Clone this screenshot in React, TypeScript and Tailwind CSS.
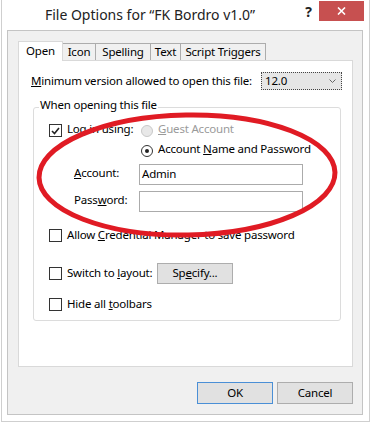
import React from "react";

const font = { fontFamily: '"Noto Sans", "Segoe UI", sans-serif' };

function Checkbox({ checked = false }: { checked?: boolean }) {
  return (
    <span className="flex h-[13px] w-[13px] shrink-0 items-center justify-center border border-[#333333] bg-white">
      {checked && (
        <svg width="9" height="8" viewBox="0 0 9 8">
          <path d="M1 4 L3.5 6.5 L8 1" fill="none" stroke="#222" strokeWidth="1.6" />
        </svg>
      )}
    </span>
  );
}

function Radio({ checked = false, disabled = false }: { checked?: boolean; disabled?: boolean }) {
  return (
    <span
      className={
        disabled
          ? "flex h-[12px] w-[12px] shrink-0 items-center justify-center rounded-full border border-[#c8c8c8] bg-[#e8e8e8]"
          : "flex h-[12px] w-[12px] shrink-0 items-center justify-center rounded-full border border-[#333333] bg-white"
      }
    >
      {checked && <span className="h-[4px] w-[4px] rounded-full bg-[#222]" />}
    </span>
  );
}

export default function App() {
  return (
    <div
      className="relative h-[429px] w-[373px] overflow-hidden whitespace-nowrap bg-white text-[11.5px] leading-[16px] tracking-[-0.2px] text-black"
      style={font}
    >
      <div className="ml-[1px] flex h-[422px] w-[369px] flex-col border-x border-b border-[#cfcfcf] bg-white">
        {/* title bar */}
        <div className="flex h-[30px] shrink-0 items-start">
          <div className="flex h-[30px] flex-1 items-center justify-center pb-[1px] text-[14px] tracking-normal text-[#222]">
            File Options for “FK Bordro v1.0”
          </div>
          <div className="flex h-[22px] w-[21px] items-center justify-center pt-[2px] text-[14px] font-bold text-[#222]">?</div>
          <div className="mt-[1px] flex h-[20px] w-[45px] items-center justify-center bg-[#c75050]">
            <svg width="9" height="8" viewBox="0 0 9 8">
              <path d="M1 0.5 L8 7.5 M8 0.5 L1 7.5" stroke="#fff" strokeWidth="1.6" />
            </svg>
          </div>
          <div className="w-[5px]" />
        </div>

        {/* client */}
        <div className="ml-[5px] flex h-[385px] w-[356px] flex-col border border-[#c4c4c4] bg-[#f0f0f0] pl-[10px] pt-[10px]">
          {/* tabs */}
          <div className="flex h-[19px] items-end">
            <div className="relative z-10 -mb-px flex h-[20px] w-[45px] items-center justify-center border border-b-0 border-[#d9d9d9] bg-white pb-[2px]">
              Open
            </div>
            <div className="-ml-px flex h-[17px] w-[34px] items-center justify-center border border-b-0 border-[#acacac] bg-[#f0f0f0] pb-[1px]">
              Icon
            </div>
            <div className="-ml-px flex h-[17px] w-[56px] items-center justify-center border border-b-0 border-[#acacac] bg-[#f0f0f0] pb-[1px]">
              Spelling
            </div>
            <div className="-ml-px flex h-[17px] w-[31px] items-center justify-center border border-b-0 border-[#acacac] bg-[#f0f0f0] pb-[1px]">
              Text
            </div>
            <div className="-ml-px flex h-[17px] w-[86px] items-center justify-center border border-b-0 border-[#acacac] bg-[#f0f0f0] pb-[1px]">
              Script Triggers
            </div>
          </div>

          {/* panel */}
          <div className="flex h-[307px] w-[335px] flex-col border border-[#d9d9d9] bg-white">
            <div className="ml-[12px] mt-[11px] flex h-[18px] items-center">
              <div className="w-[230px]">
                <span className="underline">M</span>inimum version allowed to open this file:
              </div>
              <div className="flex h-[18px] w-[81px] items-center justify-between border border-dotted border-[#444] bg-[#e6e6e6] pl-[3px] pr-[5px]">
                <span>12.0</span>
                <svg width="7" height="4" viewBox="0 0 7 4">
                  <path d="M0.5 0.5 L3.5 3.5 L6.5 0.5" fill="none" stroke="#666" strokeWidth="1" />
                </svg>
              </div>
            </div>

            {/* group */}
            <div className="relative ml-[14px] mt-[17px] flex h-[214px] w-[308px] flex-col rounded-[3px] border border-[#dcdcdc]">
              <span className="absolute left-[5px] top-[-11px] bg-white px-[1px]">When opening this file</span>

              <div className="ml-[15px] mt-[13px] flex h-[19px] items-center">
                <Checkbox checked />
                <span className="ml-[5px] w-[74px] pb-[3px]">Log in using:</span>
                <Radio disabled />
                <span className="ml-[5px] pb-[3px] text-[#9a9a9a]">
                  <span className="underline">G</span>uest Account
                </span>
              </div>

              <div className="ml-[107px] mt-[1px] flex h-[19px] items-center">
                <Radio checked />
                <span className="ml-[5px] pb-[3px]">
                  Account <span className="underline">N</span>ame and Password
                </span>
              </div>

              <div className="ml-[40px] mt-[4px] flex h-[21px] items-center">
                <span className="w-[65px] pb-[3px]">
                  <span className="underline">A</span>ccount:
                </span>
                <div className="flex h-[21px] w-[164px] items-center border border-[#ababab] bg-white pb-[2px] pl-[2px]">Admin</div>
              </div>

              <div className="ml-[40px] mt-[6px] flex h-[21px] items-center">
                <span className="w-[65px] pb-[3px]">
                  Pass<span className="underline">w</span>ord:
                </span>
                <div className="h-[21px] w-[164px] border border-[#ababab] bg-white" />
              </div>

              <div className="ml-[15px] mt-[14px] flex h-[19px] items-center">
                <Checkbox />
                <span className="ml-[5px] pb-[2px]">
                  Allow <span className="underline">C</span>redential Manager to save password
                </span>
              </div>

              <div className="ml-[15px] mt-[18px] flex h-[21px] items-center">
                <Checkbox />
                <span className="ml-[5px] w-[90px] pb-[2px]">
                  Switch to <span className="underline">l</span>ayout:
                </span>
                <div className="flex h-[21px] w-[76px] items-center justify-center border border-[#adadad] bg-[#e1e1e1] pb-[1px]">
                  <span>
                    Sp<span className="underline">e</span>cify...
                  </span>
                </div>
              </div>

              <div className="ml-[15px] mt-[11px] flex h-[19px] items-center">
                <Checkbox />
                <span className="ml-[5px] pb-[2px]">
                  Hide all <span className="underline">t</span>oolbars
                </span>
              </div>
            </div>
          </div>

          {/* buttons */}
          <div className="mt-[15px] flex w-[335px] justify-end gap-[4px]">
            <div className="flex h-[22px] w-[76px] items-center justify-center border border-[#4a8fd6] bg-[#e1e1e1]">OK</div>
            <div className="flex h-[22px] w-[76px] items-center justify-center border border-[#adadad] bg-[#e1e1e1]">Cancel</div>
          </div>
        </div>
      </div>

      {/* red hand-drawn ellipse overlay */}
      <svg className="pointer-events-none absolute left-0 top-0" width="373" height="429" viewBox="0 0 373 429">
        <ellipse cx="187" cy="175" rx="148" ry="60" fill="none" stroke="#e01b24" strokeWidth="5" transform="rotate(-1 187 175)" />
      </svg>
    </div>
  );
}
